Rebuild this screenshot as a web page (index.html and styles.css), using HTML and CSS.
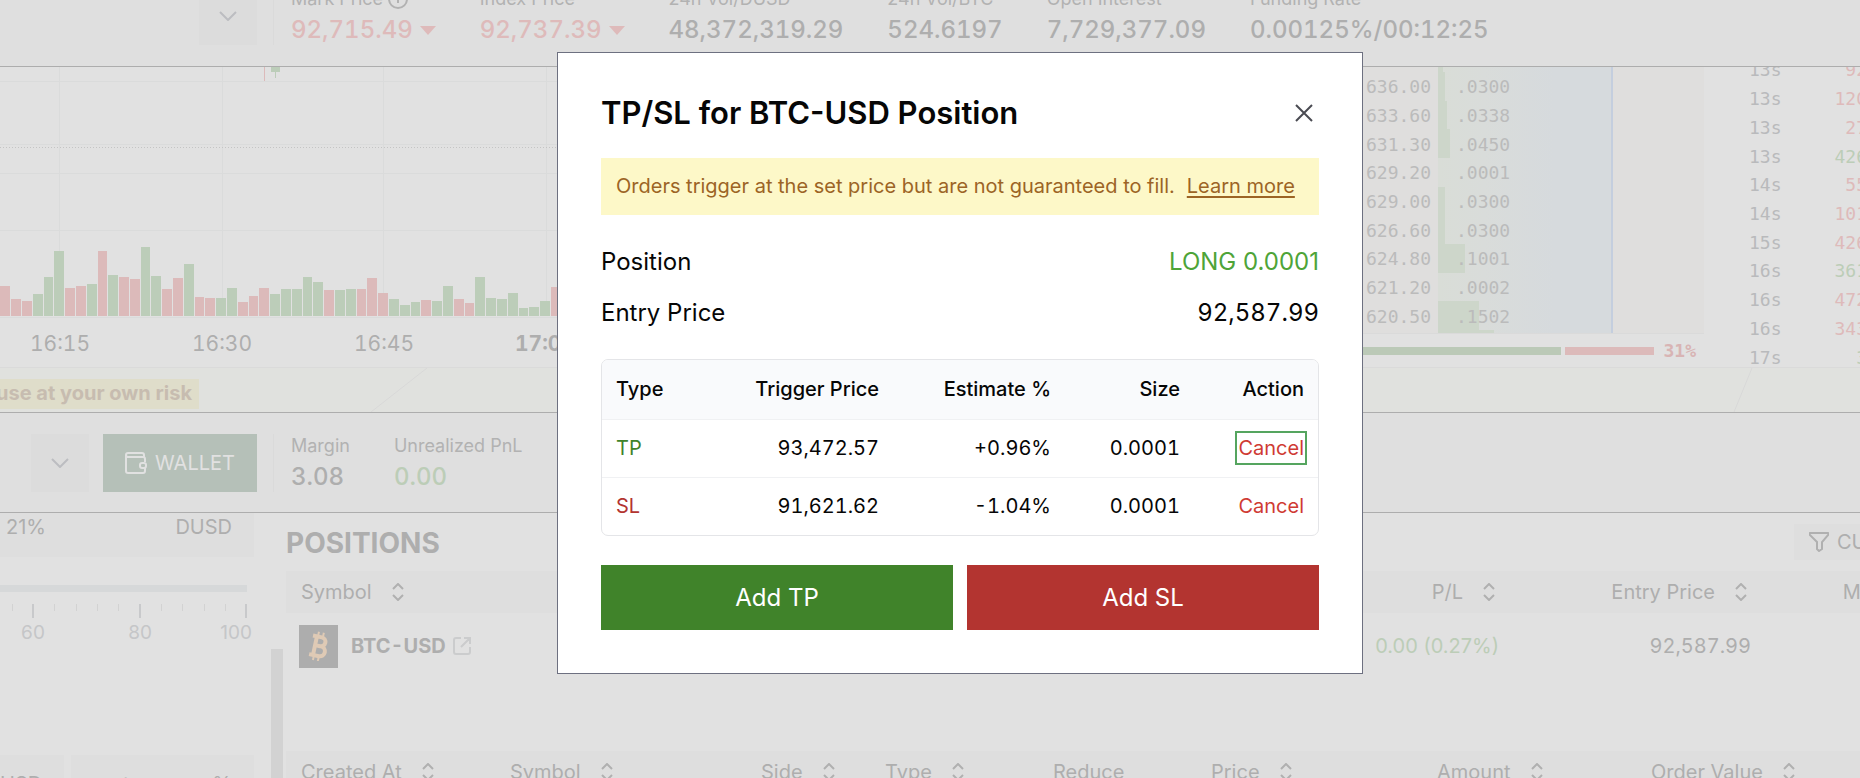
FILE: index.html
```html
<!DOCTYPE html>
<html lang="en">
<head>
<meta charset="utf-8">
<title>BTC-USD</title>
<link rel="stylesheet" href="styles.css">
</head>
<body>
<svg class="defs" aria-hidden="true">
  <symbol id="chevron" viewBox="0 0 18 10"><path d="M1 1l8 8 8-8"/></symbol>
  <symbol id="sort" viewBox="0 0 12 18"><path d="M1 6l5-5 5 5M1 12l5 5 5-5"/></symbol>
</svg>

<div class="app">
  <header class="bar bar-top">
    <div class="bar-left">
      <button class="square" aria-label="Select market"><svg class="chev"><use href="#chevron"/></svg></button>
    </div>
    <dl class="stats">
      <div class="stat"><dt>Mark Price <svg class="info" viewBox="0 0 20 20"><circle cx="10" cy="10" r="9"/><path d="M10 9v5M10 6v1"/></svg></dt><dd class="down">92,715.49<i class="tri"></i></dd></div>
      <div class="stat"><dt>Index Price</dt><dd class="down">92,737.39<i class="tri"></i></dd></div>
      <div class="stat"><dt>24h Vol/DUSD</dt><dd>48,372,319.29</dd></div>
      <div class="stat"><dt>24h Vol/BTC</dt><dd>524.6197</dd></div>
      <div class="stat"><dt>Open Interest</dt><dd>7,729,377.09</dd></div>
      <div class="stat"><dt>Funding Rate</dt><dd>0.00125%/00:12:25</dd></div>
    </dl>
  </header>

  <section class="market">
    <svg class="chart" viewBox="0 0 1284 300" preserveAspectRatio="xMinYMin slice" role="img" aria-label="Volume chart">
      <path class="grid" d="M59 0V249M222 0V249M383 0V249M546 0V249M0 14H1284M0 77H1284M0 106H1284M0 163H1284M0 250H1284"/>
      <path class="dots" d="M0 80H1284"/>
      <path class="red" d="M264 0h1v14h-1zM0 249v-30h10v30zM11 249v-17h10v17zM22 249v-15h10v15zM65 249v-28h10v28zM76 249v-30h10v30zM98 249v-65h9v65zM119 249v-39h10v39zM130 249v-37h10v37zM162 249v-27h10v27zM173 249v-38h10v38zM195 249v-19h9v19zM205 249v-18h10v18zM238 249v-14h10v14zM249 249v-20h9v20zM259 249v-28h10v28zM324 249v-26h10v26zM357 249v-27h9v27zM367 249v-38h10v38zM378 249v-23h10v23zM421 249v-16h10v16zM454 249v-17h10v17zM465 249v-13h9v13zM551 249v-29h10v29z"/>
      <path class="green" d="M271 0h9v5h-4v6h-1v-6h-4zM33 249v-22h10v22zM44 249v-39h9v39zM54 249v-65h10v65zM87 249v-32h10v32zM108 249v-41h10v41zM141 249v-69h9v69zM151 249v-40h10v40zM184 249v-52h10v52zM216 249v-18h10v18zM227 249v-28h10v28zM270 249v-22h10v22zM281 249v-27h10v27zM292 249v-27h10v27zM303 249v-39h9v39zM313 249v-34h10v34zM335 249v-26h10v26zM346 249v-27h10v27zM389 249v-17h10v17zM400 249v-11h10v11zM411 249v-14h9v14zM432 249v-15h10v15zM443 249v-30h10v30zM475 249v-39h10v39zM486 249v-18h10v18zM497 249v-17h10v17zM508 249v-23h10v23zM519 249v-8h9v8zM529 249v-9h10v9zM540 249v-15h10v15z"/>
      <g class="ticks"><text x="60" y="284">16:15</text><text x="222" y="284">16:30</text><text x="384" y="284">16:45</text><text class="hour" x="545" y="284">17:00</text></g>
    </svg>
    <div class="book">
      <div class="levels">
        <div class="depth-line"></div>
        <div class="level"><span></span><span class="size"><i style="width:5px"></i></span></div>
        <div class="level"><span>92,636.00</span><span class="size"><i style="width:7px"></i>.0300</span></div>
        <div class="level"><span>92,633.60</span><span class="size"><i style="width:9px"></i>.0338</span></div>
        <div class="level"><span>92,631.30</span><span class="size"><i style="width:12px"></i>.0450</span></div>
        <div class="level"><span>92,629.20</span><span class="size">.0001</span></div>
        <div class="level"><span>92,629.00</span><span class="size"><i style="width:7px"></i>.0300</span></div>
        <div class="level"><span>92,626.60</span><span class="size"><i style="width:7px"></i>.0300</span></div>
        <div class="level"><span>92,624.80</span><span class="size"><i style="width:27px"></i>.1001</span></div>
        <div class="level"><span>92,621.20</span><span class="size">.0002</span></div>
        <div class="level"><span>92,620.50</span><span class="size"><i style="width:41px"></i>.1502</span></div>
        <div class="level"><span></span><span class="size"><i style="width:56px"></i></span></div>
      </div>
      <div class="ratio"><span class="buy"></span><span class="sell"></span><b>31%</b></div>
    </div>
    <ul class="trades">
      <li>13s <span class="down">92</span></li>
      <li>13s <span class="down">120</span></li>
      <li>13s <span class="down">27</span></li>
      <li>13s <span class="up">426</span></li>
      <li>14s <span class="down">55</span></li>
      <li>14s <span class="down">101</span></li>
      <li>15s <span class="down">426</span></li>
      <li>16s <span class="up">361</span></li>
      <li>16s <span class="down">472</span></li>
      <li>16s <span class="down">343</span></li>
      <li>17s <span class="up">3</span></li>
    </ul>
  </section>

  <section class="notice">
    <p class="risk">use at your own risk</p>
    <svg class="rays" viewBox="0 0 1661 44" preserveAspectRatio="none"><path d="M228 0L172 44M1553 0l-18 44"/></svg>
  </section>

  <section class="bar bar-account">
    <div class="bar-left">
      <button class="square" aria-label="Select account"><svg class="chev"><use href="#chevron"/></svg></button>
      <button class="wallet"><svg viewBox="0 0 22 22"><path d="M20 10V7a2 2 0 0 0-2-2H3a2 2 0 0 1-2-2v16a2 2 0 0 0 2 2h15a2 2 0 0 0 2-2v-3M1 3a2 2 0 0 1 2-2h14a2 2 0 0 1 2 2v2"/><rect x="15" y="11" width="6" height="5" rx="2"/></svg>WALLET</button>
    </div>
    <dl class="stats">
      <div class="stat"><dt>Margin</dt><dd>3.08</dd></div>
      <div class="stat"><dt>Unrealized PnL</dt><dd class="up">0.00</dd></div>
    </dl>
  </section>

  <main class="bottom">
    <aside class="ticket">
      <div class="field"><span>21%</span><span>DUSD</span></div>
      <div class="track"></div>
      <svg class="ruler" viewBox="0 0 254 38"><path class="minor" d="M12 0v7M54 0v7M76 0v7M97 0v7M118 0v7M161 0v7M182 0v7M204 0v7M225 0v7"/><path class="major" d="M33 0v14M140 0v14M246 0v14"/><text x="33" y="35">60</text><text x="140" y="35">80</text><text class="end" x="252" y="35">100</text></svg>
      <div class="pair"><span class="box">USD</span><span class="box wide"><span>t</span><span>%</span></span></div>
    </aside>
    <div class="thumb"></div>
    <div class="tables">
      <div class="heading">
        <h2>POSITIONS</h2>
        <button class="filter"><svg viewBox="0 0 20 20"><path d="M2 1h16a1 1 0 0 1 1 2l-6 7v7l-3 2-2-2v-7L1 3a1 1 0 0 1 1-2z"/></svg>CURRENT</button>
      </div>
      <table class="positions">
        <colgroup><col class="c-symbol"><col class="c-num"><col class="c-num"><col class="c-mark"></colgroup>
        <thead><tr><th>Symbol<svg class="sort"><use href="#sort"/></svg></th><th>P/L<svg class="sort"><use href="#sort"/></svg></th><th>Entry Price<svg class="sort"><use href="#sort"/></svg></th><th>Mark Price<svg class="sort"><use href="#sort"/></svg></th></tr></thead>
        <tbody><tr><td><div class="asset"><span class="coin"><svg viewBox="0 0 22 30"><g transform="rotate(12 11 15)"><path d="M3 6h9a4 4 0 0 1 0 9H7M7 15h6a5 5 0 0 1 0 10H3M7 6v19"/><path class="pins" d="M8 1v4M13 1v4M8 26v4M13 26v4"/></g></svg></span><b>BTC-USD</b><svg class="ext" viewBox="0 0 18 18"><path d="M8 1H3a2 2 0 0 0-2 2v12a2 2 0 0 0 2 2h12a2 2 0 0 0 2-2v-5M11 1h6v6M17 1L8 10"/></svg></div></td><td class="up">0.00 (0.27%)</td><td>92,587.99</td><td></td></tr></tbody>
      </table>
      <table class="orders">
        <colgroup><col class="o1"><col class="o2"><col class="o3"><col class="o4"><col class="o5"><col class="o6"><col class="o7"><col></colgroup>
        <thead><tr><th>Created At<svg class="sort"><use href="#sort"/></svg></th><th>Symbol<svg class="sort"><use href="#sort"/></svg></th><th>Side<svg class="sort"><use href="#sort"/></svg></th><th>Type<svg class="sort"><use href="#sort"/></svg></th><th>Reduce</th><th>Price<svg class="sort"><use href="#sort"/></svg></th><th>Amount<svg class="sort"><use href="#sort"/></svg></th><th>Order Value<svg class="sort"><use href="#sort"/></svg></th></tr></thead>
      </table>
    </div>
  </main>
</div>

<div class="overlay">
  <div class="modal" role="dialog" aria-modal="true" aria-labelledby="modal-title">
    <div class="modal-head">
      <h1 id="modal-title">TP/SL for BTC-USD Position</h1>
      <button class="close" aria-label="Close"><svg viewBox="0 0 18 18"><path d="M1 1l16 16M17 1L1 17"/></svg></button>
    </div>
    <p class="warn">Orders trigger at the set price but are not guaranteed to fill.<a href="#">Learn more</a></p>
    <dl class="facts">
      <div><dt>Position</dt><dd class="long">LONG 0.0001</dd></div>
      <div><dt>Entry Price</dt><dd class="num">92,587.99</dd></div>
    </dl>
    <div class="tpsl">
      <table>
        <colgroup><col class="t1"><col class="t2"><col class="t3"><col class="t4"><col></colgroup>
        <thead><tr><th>Type</th><th>Trigger Price</th><th>Estimate %</th><th>Size</th><th>Action</th></tr></thead>
        <tbody>
          <tr><td class="tp">TP</td><td>93,472.57</td><td>+0.96%</td><td>0.0001</td><td><button class="cancel focused">Cancel</button></td></tr>
          <tr><td class="sl">SL</td><td>91,621.62</td><td>-1.04%</td><td>0.0001</td><td><button class="cancel">Cancel</button></td></tr>
        </tbody>
      </table>
    </div>
    <div class="actions"><button class="add add-tp">Add TP</button><button class="add add-sl">Add SL</button></div>
  </div>
</div>
</body>
</html>
```
FILE: styles.css
```css
* { box-sizing: border-box; margin: 0; padding: 0; }
html, body { height: 100%; overflow: hidden; }
body { font: 20px/24px Inter, "Liberation Sans", sans-serif; color: #aeaeae; background: #e1e1e1; }
button { font: inherit; color: inherit; border: 0; background: none; }
svg { fill: none; display: block; }
ul { list-style: none; }
.defs { width: 0; height: 0; position: absolute; }
.up { color: #bccdb7; }
.down { color: #debaba; }

.app { height: 100vh; display: flex; flex-direction: column; overflow: hidden; }

/* Market and account bars */
.bar { display: flex; background: #dfdfdf; border-bottom: 1px solid #adadad; flex: none; }
.bar-top { height: 67px; align-items: flex-end; padding-bottom: 21px; }
.bar-account { height: 100px; align-items: center; }
.bar-left { width: 257px; display: flex; justify-content: flex-end; gap: 14px; }
.square { width: 58px; height: 58px; background: #dcdcdc; display: grid; place-items: center; }
.chev { width: 18px; height: 10px; stroke: #bcbdc1; stroke-width: 2; }
.wallet { width: 154px; background: #b5c0b8; color: #e1e1e1; display: flex; align-items: center; justify-content: center; gap: 8px; }
.wallet svg { width: 22px; height: 22px; stroke: #e1e1e1; stroke-width: 2; }
.stats { display: flex; gap: 44px; margin-left: 16px; border-left: 1px solid #dadada; padding-left: 17px; height: 58px; align-items: flex-end; }
.stat { white-space: nowrap; }
.stat dt { font-size: 18px; line-height: 24px; display: flex; align-items: center; gap: 5px; color: #b2b2b2; }
.stat dd { font-size: 24px; line-height: 30px; font-weight: 500; padding-top: 4px; display: flex; align-items: center; gap: 7px; font-variant-numeric: tabular-nums; }
.info { width: 20px; height: 20px; stroke: #b2b2b2; stroke-width: 2; }
.tri { border: 8px solid transparent; border-top: 9px solid #debaba; border-bottom: 0; }

/* Chart, order book, trades */
.market { display: grid; grid-template-columns: minmax(0, 1fr) 420px 156px; grid-template-rows: 300px; height: 301px; flex: none; border-bottom: 1px solid #dadada; overflow: hidden; }
.chart { width: 100%; height: 300px; shape-rendering: crispEdges; }
.grid { stroke: #dadbdb; }
.dots { stroke: #c4c4c4; stroke-dasharray: 1 2; }
.red { fill: #dcbaba; }
.green { fill: #bccdb9; }
.ticks text { fill: #aeaeae; font-size: 21px; text-anchor: middle; font-variant-numeric: tabular-nums; }
.ticks .hour { font-weight: 700; }
.book { display: flex; flex-direction: column; font: 18px/24px "DejaVu Sans Mono", monospace; color: #bbb; }
.levels { flex: 1; position: relative; display: grid; grid-template-rows: 5px repeat(9, minmax(0, 1fr)) 3px; background: linear-gradient(90deg, transparent 154px, #d9ddd7 154px, #d9dcda 200px, #d6dadd 270px, #d6dadd 328px, transparent 328px), #dfdedd; border-bottom: 1px solid #dadada; }
.depth-line { position: absolute; left: 327px; top: 0; bottom: 0; width: 2px; background: #c4cede; }
.level { display: grid; grid-template-columns: 147px 1fr; column-gap: 7px; align-items: stretch; }
.level > span { display: flex; align-items: center; justify-content: flex-end; padding-top: 2px; }
.level .size { justify-content: flex-start; padding-left: 18px; position: relative; z-index: 0; }
.size i { position: absolute; left: 0; top: 0; bottom: 0; background: #cdd6ca; z-index: -1; }
.ratio { height: 33px; display: flex; align-items: center; gap: 4px; padding-right: 8px; }
.ratio span { height: 8px; }
.buy { flex: 1; background: #bbc9b7; }
.sell { width: 89px; background: #dcbaba; }
.ratio b { color: #d8b4b4; font-size: 18px; width: 38px; text-align: right; }
.trades { display: grid; grid-auto-rows: 1fr; height: 316px; margin: -11px -7px 0 0; padding-left: 45px; font: 18px/24px "DejaVu Sans Mono", monospace; color: #b9babc; }
.trades li { display: flex; justify-content: space-between; align-items: center; }

/* Notice strip */
.notice { height: 45px; flex: none; display: flex; background: #e0e1de; border-bottom: 1px solid #adadad; padding-top: 11px; }
.risk { width: 199px; height: 30px; line-height: 29px; background: #dfddca; color: #c7bcb0; font-weight: 700; padding-right: 7px; display: flex; justify-content: flex-end; white-space: nowrap; flex: none; }
.rays { flex: 1; height: 44px; margin-top: -11px; stroke: #d8d8d8; }

/* Ticket and tables */
.bottom { flex: 1; display: flex; min-height: 0; overflow: hidden; }
.ticket { width: 254px; flex: none; }
.field { height: 44px; background: #dedede; display: flex; justify-content: space-between; padding: 2px 22px 0 6px; }
.track { height: 7px; width: 247px; background: #d6d8d9; margin-top: 28px; }
.ruler { width: 254px; height: 38px; margin-top: 12px; shape-rendering: crispEdges; }
.ruler text { fill: #c5c6c8; font-size: 19px; text-anchor: middle; }
.ruler .end { text-anchor: end; }
.minor { stroke: #d2d2d2; }
.major { stroke: #c8c9cb; stroke-width: 2; }
.pair { display: flex; gap: 7px; margin-top: 113px; }
.box { width: 64px; background: #dedede; height: 58px; padding-top: 17px; display: flex; }
.wide { width: 183px; justify-content: space-between; padding: 17px 22px 0 52px; }
.thumb { width: 12px; margin: 136px 3px 0 17px; background: #d2d2d2; flex: none; }
.tables { flex: 1; min-width: 0; }
.heading { height: 58px; display: flex; justify-content: space-between; padding-top: 11px; }
.heading h2 { font-size: 28px; line-height: 38px; font-weight: 700; }
.filter { width: 66px; height: 36px; background: #dedede; display: flex; align-items: center; gap: 8px; padding-left: 15px; }
.filter svg { width: 20px; height: 20px; stroke: #b0b0b0; stroke-width: 2; flex: none; }
table { border-collapse: collapse; table-layout: fixed; }
th { font-weight: 400; text-align: left; }
.tables th { height: 42px; padding-left: 15px; background: #dedede; white-space: nowrap; }
.sort { display: inline-block; width: 12px; height: 18px; margin-left: 20px; vertical-align: -2px; stroke: #b0b0b0; stroke-width: 2; }
.positions { width: 1708px; }
.c-symbol { width: 974px; }
.c-num { width: 252px; }
.c-mark { width: 230px; }
.positions th + th { text-align: right; padding-right: 17px; }
.positions td { height: 66px; padding: 0 13px; text-align: right; font-variant-numeric: tabular-nums; }
.positions td.up { font-variant-numeric: normal; }
.asset { display: flex; align-items: center; }
.asset b { margin: 0 7px 0 13px; font-weight: 700; }
.coin { width: 39px; height: 43px; background: #adadad; display: grid; place-items: center; }
.coin svg { width: 22px; height: 30px; stroke: #dfcab5; stroke-width: 4; }
.coin .pins { stroke-width: 2; }
.ext { width: 18px; height: 18px; stroke: #cbcccd; stroke-width: 2; }
.orders { width: 100%; margin-top: 72px; }
.o1 { width: 209px; } .o2 { width: 251px; } .o3 { width: 124px; } .o4 { width: 168px; }
.o5 { width: 158px; } .o6 { width: 226px; } .o7 { width: 214px; }

/* Dialog */
.overlay { position: fixed; inset: 0; display: grid; place-items: center; padding: 0 0 52px 60px; }
.modal { width: 806px; background: #fff; color: #060606; border: 1px solid #6d7080; padding: 38px 43px 43px; }
.modal-head { display: flex; justify-content: space-between; align-items: center; padding-right: 5px; }
.modal h1 { font-size: 31px; line-height: 44px; font-weight: 600; }
.close { padding: 0 1px; }
.close svg { width: 18px; height: 18px; stroke: #4a4b52; stroke-width: 2; }
.warn { margin-top: 23px; height: 57px; line-height: 56px; padding: 0 15px; background: #fdf8c8; color: #9c6425; white-space: nowrap; }
.warn a { color: inherit; margin-left: 12px; text-underline-offset: 3px; text-decoration-thickness: 2px; text-decoration-skip-ink: none; }
.facts { padding-top: 21px; font-size: 24px; }
.facts div { display: flex; justify-content: space-between; line-height: 51px; }
.long { color: #4ea438; }
.num, .tpsl td { font-variant-numeric: tabular-nums; }
.tpsl { margin-top: 21px; border: 1px solid #e4e5e8; border-radius: 7px; overflow: hidden; }
.tpsl table { width: 100%; }
.t1 { width: 110px; } .t2 { width: 181px; } .t3 { width: 172px; } .t4 { width: 129px; }
.tpsl th, .tpsl td { padding: 0 14px; text-align: right; height: 58px; white-space: nowrap; }
.tpsl th { height: 59px; font-weight: 500; background: #f9fafc; }
.tpsl th:first-child, .tpsl td:first-child { text-align: left; }
.tpsl tbody tr { border-top: 1px solid #f0f1f3; }
.tpsl td.tp { color: #40832a; }
.tpsl td.sl { color: #b33430; }
.cancel { color: #cf3a33; line-height: 28px; }
.focused { outline: 2px solid #55a55f; outline-offset: 1px; }
.actions { display: grid; grid-template-columns: 1fr 1fr; gap: 14px; margin-top: 29px; }
.add { height: 65px; color: #fff; font-size: 24px; }
.add-tp { background: #40832a; }
.add-sl { background: #b33430; }
```
